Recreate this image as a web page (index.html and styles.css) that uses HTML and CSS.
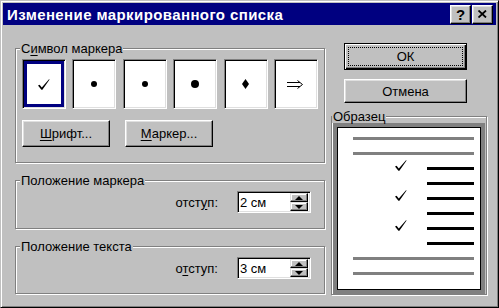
FILE: index.html
```html
<!DOCTYPE html>
<html lang="ru">
<head>
  <meta charset="UTF-8">
  <title>Изменение маркированного списка</title>
  <link rel="stylesheet" href="styles.css">
</head>
<body>

  <div class="window">
    <div class="titlebar">
      <span class="title">Изменение маркированного списка</span>
      <div class="title-buttons">
        <button class="tbtn tbtn-help">?</button>
        <button class="tbtn">
          <svg width="9" height="8" viewBox="0 0 9 8"><path d="M0.5 0.5 L8 7.5 M8 0.5 L0.5 7.5" stroke="#000" stroke-width="1.8"/></svg>
        </button>
      </div>
    </div>

    <div class="content">
      <div class="left">
        <div class="group group-symbols">
          <div class="group-title">С<u>и</u>мвол маркера</div>
          <div class="bullets">
            <div class="bullet selected">
              <svg width="12" height="11" viewBox="0 0 12 11"><path d="M0 6.5 L1.6 5.8 L3.8 8.4 L11 0.2 L11.6 0.6 L4.4 10.8 L3.4 10.8 Z" fill="#000"/></svg>
            </div>
            <div class="bullet"><span class="dot"></span></div>
            <div class="bullet"><span class="dot"></span></div>
            <div class="bullet"><span class="dot dot-big"></span></div>
            <div class="bullet">
              <svg width="7" height="10" viewBox="0 0 7 10"><path d="M3.5 0 L7 5 L3.5 10 L0 5 Z" fill="#000"/></svg>
            </div>
            <div class="bullet">
              <svg width="17" height="9" viewBox="0 0 17 9"><path d="M0 2.5 H13 M0 6.5 H13 M10.5 0.5 L15.5 4.5 L10.5 8.5" stroke="#000" stroke-width="1" fill="none"/></svg>
            </div>
          </div>
          <div class="btn-row">
            <button class="btn btn-wide"><u>Ш</u>рифт...</button>
            <button class="btn btn-wide"><u>М</u>аркер...</button>
          </div>
        </div>

        <div class="group group-pos">
          <div class="group-title">Положение маркера</div>
          <div class="field-row">
            <label>отст<u>у</u>п:</label>
            <div class="spin">
              <span class="spin-value">2 см</span>
              <div class="spin-btns">
                <div class="spin-btn"><span class="arrow-up"></span></div>
                <div class="spin-btn"><span class="arrow-down"></span></div>
              </div>
            </div>
          </div>
        </div>

        <div class="group group-text">
          <div class="group-title">Положение текста</div>
          <div class="field-row">
            <label>о<u>т</u>ступ:</label>
            <div class="spin">
              <span class="spin-value">3 см</span>
              <div class="spin-btns">
                <div class="spin-btn"><span class="arrow-up"></span></div>
                <div class="spin-btn"><span class="arrow-down"></span></div>
              </div>
            </div>
          </div>
        </div>
      </div>

      <div class="right">
        <button class="btn btn-default"><span class="focus">ОК</span></button>
        <button class="btn btn-cancel">Отмена</button>

        <div class="group group-sample">
          <div class="group-title">Образец</div>
          <div class="preview">
            <div class="line gray"></div>
            <div class="line gray"></div>
            <div class="line item"><svg class="check" width="12" height="11" viewBox="0 0 12 11"><path d="M0 6.5 L1.6 5.8 L3.8 8.4 L11 0.2 L11.6 0.6 L4.4 10.8 L3.4 10.8 Z" fill="#000"/></svg><span class="bar"></span></div>
            <div class="line item"><span class="bar"></span></div>
            <div class="line item"><svg class="check" width="12" height="11" viewBox="0 0 12 11"><path d="M0 6.5 L1.6 5.8 L3.8 8.4 L11 0.2 L11.6 0.6 L4.4 10.8 L3.4 10.8 Z" fill="#000"/></svg><span class="bar"></span></div>
            <div class="line item"><span class="bar"></span></div>
            <div class="line item"><svg class="check" width="12" height="11" viewBox="0 0 12 11"><path d="M0 6.5 L1.6 5.8 L3.8 8.4 L11 0.2 L11.6 0.6 L4.4 10.8 L3.4 10.8 Z" fill="#000"/></svg><span class="bar"></span></div>
            <div class="line item"><span class="bar"></span></div>
            <div class="line gray"></div>
            <div class="line gray"></div>
          </div>
        </div>
      </div>
    </div>
  </div>

</body>
</html>
```

FILE: styles.css
```css
body {
  margin: 0;
  background-color: #c0c0c0;
  font-family: "Liberation Sans", Arial, sans-serif;
  font-size: 13px;
  color: #000;
}
u {
  text-decoration-thickness: 1px;
  text-underline-offset: 2px;
}
.window {
  width: 499px;
  height: 308px;
  box-sizing: border-box;
  border: 1px solid;
  border-color: #c0c0c0 #000 #000 #c0c0c0;
  box-shadow: inset 1px 1px #fff, inset -1px -1px #808080;
  padding: 2px;
  background-color: #c0c0c0;
}
.titlebar {
  height: 22px;
  background-color: #000080;
  display: flex;
  align-items: center;
  justify-content: space-between;
  padding: 0 3px 0 4px;
}
.title {
  color: #fff;
  font-weight: bold;
  font-size: 15px;
  letter-spacing: 0.4px;
}
.title-buttons {
  display: flex;
  gap: 1px;
}
.tbtn {
  width: 21px;
  height: 19px;
  padding: 0;
  display: flex;
  align-items: center;
  justify-content: center;
  background-color: #c0c0c0;
  border: 1px solid;
  border-color: #fff #000 #000 #fff;
  box-shadow: inset -1px -1px #808080, inset 1px 1px #dfdfdf;
  font-family: "Liberation Sans", Arial, sans-serif;
  font-weight: bold;
  font-size: 15px;
  color: #000;
}
.content {
  display: flex;
  padding-left: 12px;
}
.left {
  width: 311px;
  padding-top: 23px;
}
.right {
  width: 157px;
  margin-left: 5px;
  padding-top: 18px;
  display: flex;
  flex-direction: column;
}
.group {
  border: 1px solid #808080;
  box-shadow: inset 1px 1px #fff, 1px 1px #fff;
  width: 310px;
  box-sizing: border-box;
}
.group-title {
  display: table;
  margin: -7px 0 0 4px;
  padding: 0 1px;
  line-height: 13px;
  background-color: #c0c0c0;
}
.bullets {
  display: flex;
  justify-content: space-between;
  width: 296px;
  margin: 4px 0 0 6px;
}
.bullet {
  width: 44px;
  height: 50px;
  box-sizing: border-box;
  background-color: #fff;
  border: 1px solid;
  border-color: #808080 #fff #fff #808080;
  box-shadow: inset 1px 1px #000, inset -1px -1px #dfdfdf;
  display: flex;
  align-items: center;
  justify-content: center;
}
.bullet.selected {
  box-shadow: inset 1px 1px #000, inset -1px -1px #dfdfdf, inset 0 0 0 4px #000080;
}
.dot {
  width: 6px;
  height: 6px;
  border-radius: 50%;
  background-color: #000;
}
.dot-big {
  width: 8px;
  height: 8px;
}
.btn-row {
  display: flex;
  gap: 15px;
  margin: 11px 0 15px 6px;
}
.btn {
  padding: 0;
  background-color: #c0c0c0;
  border: 1px solid;
  border-color: #fff #000 #000 #fff;
  box-shadow: inset -1px -1px #808080, inset 1px 1px #dfdfdf;
  font-family: "Liberation Sans", Arial, sans-serif;
  font-size: 13px;
  color: #000;
}
.btn-wide {
  width: 88px;
  height: 27px;
}
.group-pos {
  margin-top: 17px;
}
.group-text {
  margin-top: 17px;
}
.field-row {
  display: flex;
  align-items: center;
  justify-content: flex-end;
  gap: 19px;
  margin: 4px 13px 15px 0;
}
.group-text .field-row {
  margin: 4px 13px 14px 0;
}
.spin {
  width: 74px;
  height: 22px;
  box-sizing: border-box;
  background-color: #fff;
  border: 1px solid;
  border-color: #808080 #fff #fff #808080;
  box-shadow: inset 1px 1px #000, inset -1px -1px #dfdfdf;
  display: flex;
  align-items: center;
  justify-content: space-between;
  padding: 2px 2px 2px 2px;
}
.spin-value {
  padding-left: 0;
}
.spin-btns {
  display: flex;
  flex-direction: column;
  width: 18px;
  height: 18px;
}
.spin-btn {
  flex: 1;
  box-sizing: border-box;
  background-color: #c0c0c0;
  border: 1px solid;
  border-color: #dfdfdf #000 #000 #dfdfdf;
  box-shadow: inset -1px -1px #808080, inset 1px 1px #fff;
  display: flex;
  align-items: center;
  justify-content: center;
}
.arrow-up {
  width: 0;
  height: 0;
  border-left: 4px solid transparent;
  border-right: 4px solid transparent;
  border-bottom: 4px solid #000;
}
.arrow-down {
  width: 0;
  height: 0;
  border-left: 4px solid transparent;
  border-right: 4px solid transparent;
  border-top: 4px solid #000;
}
.btn-default {
  width: 123px;
  height: 27px;
  margin-left: 13px;
  border-color: #000;
  box-shadow: inset 1px 1px #fff, inset -1px -1px #000, inset -2px -2px #808080;
  display: flex;
  padding: 3px;
}
.focus {
  flex: 1;
  border: 1px dotted #000;
  display: flex;
  align-items: center;
  justify-content: center;
}
.btn-cancel {
  width: 123px;
  height: 24px;
  margin: 9px 0 0 13px;
}
.group-sample {
  width: 156px;
  height: 179px;
  margin-top: 13px;
}
.group-sample .group-title {
  margin-left: 0;
}
.preview {
  height: 171px;
  box-sizing: border-box;
  margin: 0 1px;
  border: 4px solid #808080;
  background-color: #fff;
  box-shadow: inset 0 0 0 1px #000;
  display: flex;
  flex-direction: column;
  gap: 12px;
  padding: 10px 7px 0 16px;
}
.line {
  height: 3px;
  flex-shrink: 0;
}
.gray {
  background-color: #808080;
}
.item {
  display: flex;
  align-items: center;
  justify-content: flex-end;
  gap: 20px;
}
.check {
  flex-shrink: 0;
  margin-top: -7px;
}
.bar {
  width: 47px;
  height: 3px;
  background-color: #000;
}
```
